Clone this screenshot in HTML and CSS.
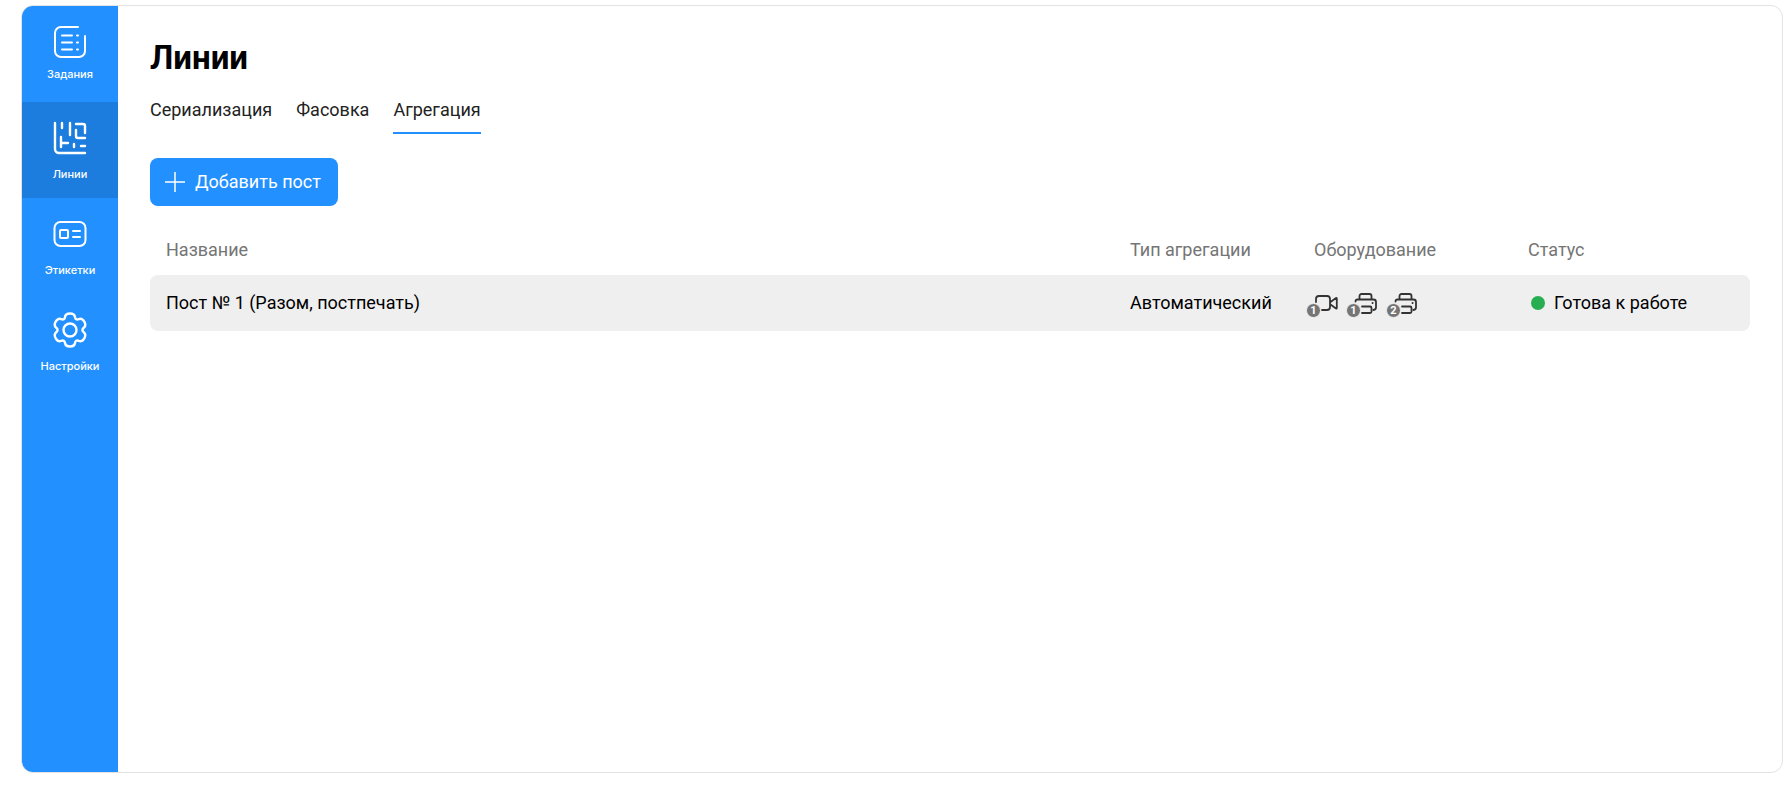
FILE: index.html
```html
<!DOCTYPE html>
<html lang="ru">
<head>
<meta charset="utf-8">
<title>Линии</title>
<link rel="stylesheet" href="styles.css">
</head>
<body>
<div class="app">
  <nav class="sidebar">
    <a class="nav-item nav-item-compact" href="#tasks">
      <svg class="nav-icon" viewBox="0 0 36 36" aria-hidden="true"><path d="M26 3H9a6 6 0 0 0-6 6v18a6 6 0 0 0 6 6h18a6 6 0 0 0 6-6V12M10 11.500h10M10 18.500h10M10 25.500h10M25 11.500h1M25 18.500h1M25 25.500h1"/></svg>
      <span>Задания</span>
    </a>
    <a class="nav-item nav-item-active" href="#lines" aria-current="page">
      <svg class="nav-icon nav-icon-bold" viewBox="0 0 36 36" aria-hidden="true"><path d="M3 3v26a4 4 0 0 0 4 4h26M10 3v5M18 3v12M24 4h7a2 2 0 0 1 2 2v7M24 10v6a2 2 0 0 0 2 2h7M9 17v10M9 23h7M22 24v3M29 26h4"/></svg>
      <span>Линии</span>
    </a>
    <a class="nav-item" href="#labels">
      <svg class="nav-icon" viewBox="0 0 36 36" aria-hidden="true"><rect x="2.500" y="6" width="31" height="24" rx="6"/><rect x="8" y="14" width="8" height="8" rx="1"/><path d="M21 15h7M21 21h7"/></svg>
      <span>Этикетки</span>
    </a>
    <a class="nav-item" href="#settings">
      <svg class="nav-icon nav-icon-bold" viewBox="0 0 36 36" aria-hidden="true"><path d="M18 1.500Q22.500 1.500 23 5Q23.500 8.500 26.800 7.100Q30 5.800 32.300 9.700Q34.500 13.600 31.800 15.800Q29 18 31.800 20.200Q34.500 22.400 32.300 26.300Q30 30.200 26.800 28.900Q23.500 27.500 23 31Q22.500 34.500 18 34.500Q13.500 34.500 13 31Q12.500 27.500 9.200 28.900Q6 30.200 3.700 26.300Q1.500 22.400 4.200 20.200Q7 18 4.200 15.800Q1.500 13.600 3.700 9.700Q6 5.800 9.200 7.100Q12.500 8.500 13 5Q13.500 1.500 18 1.500z"/><circle cx="18" cy="18" r="6.500"/></svg>
      <span>Настройки</span>
    </a>
  </nav>
  <main class="content">
    <h1 class="title">Линии</h1>
    <div class="tabs">
      <a class="tab" href="#serialization">Сериализация</a>
      <a class="tab" href="#packing">Фасовка</a>
      <a class="tab tab-active" href="#aggregation" aria-current="true">Агрегация</a>
    </div>
    <button class="add-button" type="button">
      <svg class="plus" viewBox="0 0 20 20" aria-hidden="true"><path d="M10 0v20M0 10h20"/></svg>
      Добавить пост
    </button>
    <table class="posts">
      <thead>
        <tr>
          <th scope="col">Название</th>
          <th scope="col" class="col-type">Тип агрегации</th>
          <th scope="col" class="col-devices">Оборудование</th>
          <th scope="col" class="col-status">Статус</th>
        </tr>
      </thead>
      <tbody>
        <tr>
          <td>Пост № 1 (Разом, постпечать)</td>
          <td>Автоматический</td>
          <td>
            <div class="devices">
              <span class="device"><svg class="device-icon" viewBox="0 0 24 24" aria-hidden="true"><path d="M2 11V8a3 3 0 0 1 3-3h8a3 3 0 0 1 3 3v8a3 3 0 0 1-3 3H8M16.500 11l5.500-4q.8-.3.8.5v9.500q0 .8-.8.5L16.500 13.500"/></svg><span class="badge">1</span></span>
              <span class="device"><svg class="device-icon" viewBox="0 0 24 24" aria-hidden="true"><path d="M5.500 8V5a2 2 0 0 1 2-2H15.500a2 2 0 0 1 2 2V8M1.500 10.500q0-2 2-2h16q2.500 0 2.500 2.500v5.500q0 2-2.500 2.500M8 15.500h8q1.500 0 1.500 1.500v3.500q0 1.500-1.500 1.500H8M18.500 12h.2"/></svg><span class="badge">1</span></span>
              <span class="device"><svg class="device-icon" viewBox="0 0 24 24" aria-hidden="true"><path d="M5.500 8V5a2 2 0 0 1 2-2H15.500a2 2 0 0 1 2 2V8M1.500 10.500q0-2 2-2h16q2.500 0 2.500 2.500v5.500q0 2-2.500 2.500M8 15.500h8q1.500 0 1.500 1.500v3.500q0 1.500-1.500 1.500H8M18.500 12h.2"/></svg><span class="badge">2</span></span>
            </div>
          </td>
          <td><span class="status">Готова к работе</span></td>
        </tr>
      </tbody>
    </table>
  </main>
</div>
</body>
</html>
```
FILE: styles.css
```css
* {
  box-sizing: border-box;
}

body {
  margin: 0;
  height: 100vh;
  padding: 5px 7px 20px 21px;
  background: #fff;
  color: #000;
  font: 18px/24px Roboto, "Liberation Sans", sans-serif;
}

.app {
  display: flex;
  height: 100%;
  border: 1px solid #e3e3e3;
  border-radius: 12px;
  overflow: hidden;
}

.sidebar {
  flex: none;
  width: 96px;
  background: #2290ff;
}

.nav-item {
  display: flex;
  flex-direction: column;
  align-items: center;
  gap: 10px;
  height: 96px;
  padding-top: 18px;
  color: #fff;
  font-family: Inter, "Liberation Sans", sans-serif;
  font-size: 11px;
  line-height: 16px;
  font-weight: 500;
  text-decoration: none;
}

.nav-item-compact {
  gap: 6px;
}

.nav-item-active {
  background: #1d7ddf;
}

.nav-icon {
  width: 36px;
  height: 36px;
  fill: none;
  stroke: currentColor;
  stroke-width: 2;
  stroke-linecap: round;
  stroke-linejoin: round;
}

.nav-icon-bold {
  stroke-width: 2.4;
}

.content {
  flex: 1;
  padding: 32px;
}

.title {
  margin: 0;
  font-size: 33px;
  line-height: 40px;
  font-weight: 700;
}

.tabs {
  display: flex;
  gap: 24px;
  margin: 20px 0 24px;
}

.tab {
  height: 36px;
  color: #222;
  text-decoration: none;
}

.tab-active {
  border-bottom: 2px solid #2290ff;
}

.add-button {
  display: flex;
  align-items: center;
  gap: 10px;
  height: 48px;
  padding: 0 17px 0 15px;
  border: 0;
  border-radius: 8px;
  background: #2290ff;
  color: #fff;
  font: inherit;
}

.plus {
  width: 20px;
  height: 20px;
  fill: none;
  stroke: currentColor;
  stroke-width: 1.5;
}

.posts {
  width: 100%;
  margin-top: 19px;
  border-spacing: 0;
  table-layout: fixed;
}

.posts th {
  height: 50px;
  padding: 0 16px;
  color: #757575;
  font-weight: 400;
  text-align: left;
}

.posts td {
  height: 56px;
  padding: 0 16px;
  background: #efefef;
}

.posts td:first-child {
  border-radius: 8px 0 0 8px;
}

.posts td:last-child {
  border-radius: 0 8px 8px 0;
}

.posts .col-type {
  width: 184px;
}

.posts .col-devices {
  width: 214px;
}

.posts .col-status {
  width: 238px;
}

.devices {
  display: flex;
  gap: 16px;
}

.device {
  position: relative;
  display: flex;
}

.device-icon {
  width: 24px;
  height: 24px;
  fill: none;
  stroke: #333;
  stroke-width: 1.8;
  stroke-linecap: round;
  stroke-linejoin: round;
}

.badge {
  position: absolute;
  left: -8px;
  bottom: -3px;
  width: 15px;
  height: 15px;
  border: 1px solid #efefef;
  border-radius: 50%;
  background: #757575;
  color: #fff;
  font-size: 11px;
  line-height: 13px;
  font-weight: 700;
  text-align: center;
}

.status {
  display: flex;
  align-items: center;
  gap: 9px;
}

.status::before {
  content: "";
  width: 14px;
  height: 14px;
  margin-left: 3px;
  border-radius: 50%;
  background: #27ae50;
}
```
